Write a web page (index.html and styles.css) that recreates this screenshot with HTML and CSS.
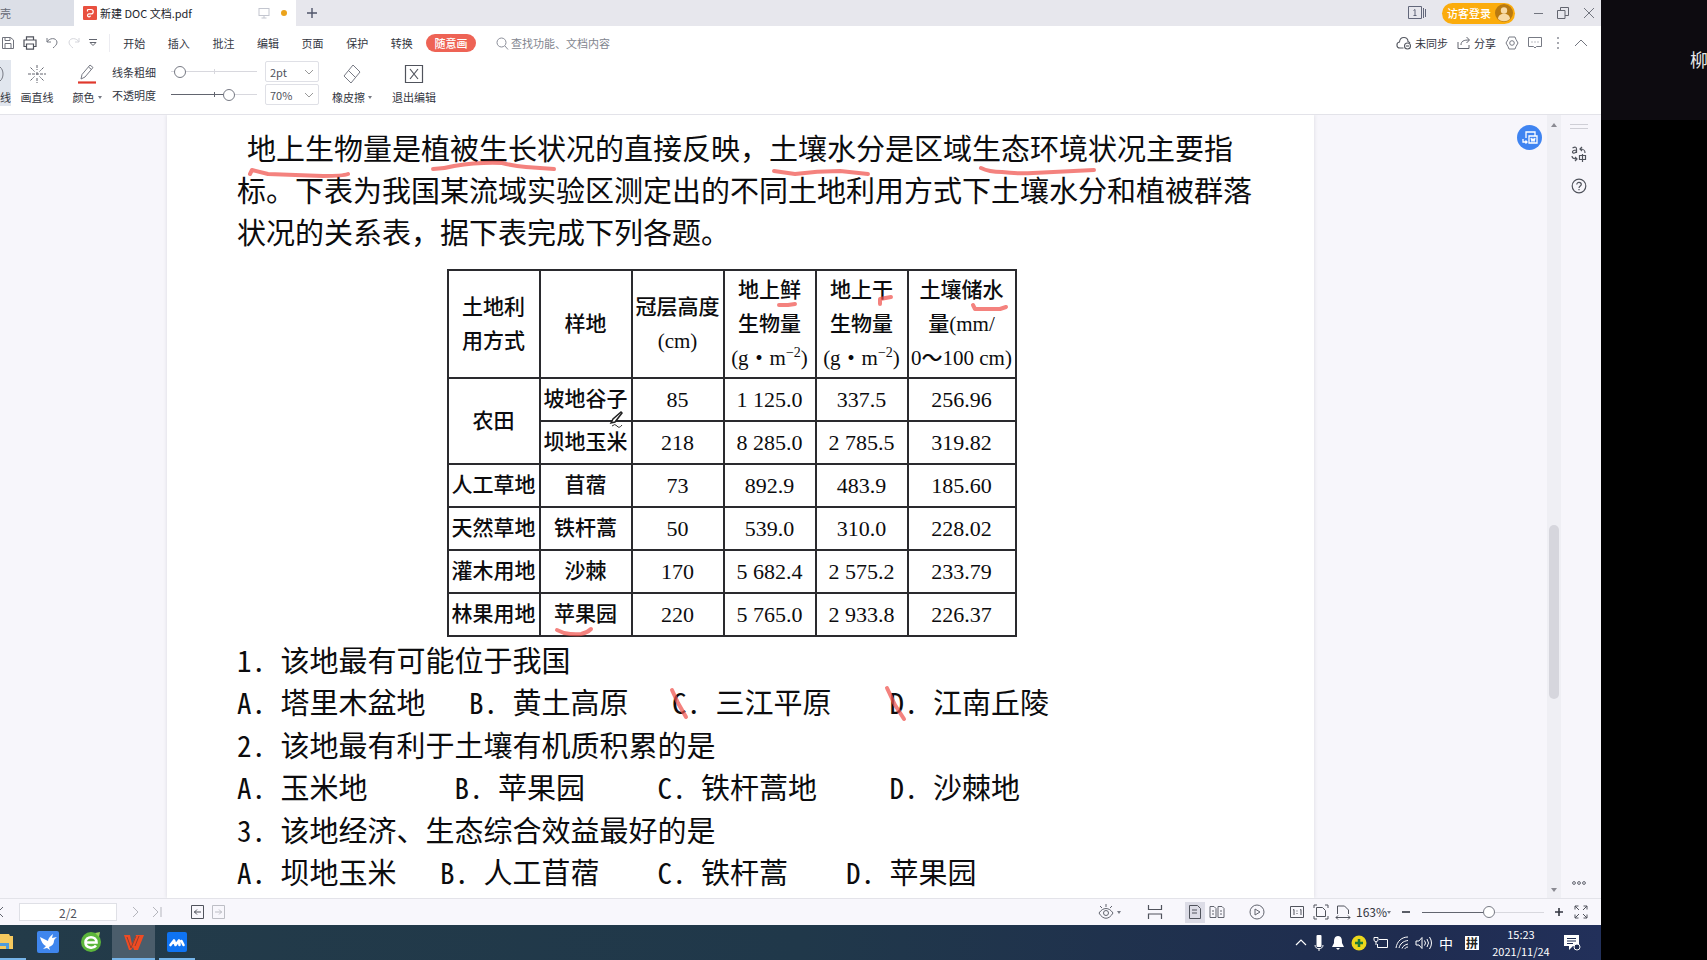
FILE: index.html
```html
<!DOCTYPE html>
<html lang="zh-CN">
<head>
<meta charset="utf-8">
<title>新建 DOC 文档.pdf</title>
<link rel="stylesheet" href="styles.css">
</head>
<body>
<div class="app">
  <header class="tabs">
    <button class="tab tab-home">壳</button>
    <div class="tab tab-active">
      <svg class="ico" width="14" height="14" viewBox="0 0 14 14"><rect width="14" height="14" rx="1" fill="#e9503f"/><path d="M4.500 3.500H8a2.200 2.200 0 0 1 0 4.400H6a1.500 1.500 0 1 0 1.500 1.800M4.500 3.500v2" fill="none" stroke="#fff" stroke-width="1.200"/></svg>
      <span class="tab-name">新建 DOC 文档.pdf</span>
      <svg class="ico" width="12" height="12" viewBox="0 0 12 12" fill="none" stroke="#c3c6cf"><rect x="1" y="1.500" width="10" height="7"/><path d="M6 9v2M3.500 11h5"/></svg>
      <span class="dot"></span>
    </div>
    <button class="plus" aria-label="新建标签"><svg width="12" height="12" viewBox="0 0 12 12" stroke="#50556a" stroke-width="1.400"><path d="M6 1v10M1 6h10"/></svg></button>
    <div class="win">
      <button aria-label="窗口列表"><svg width="18" height="14" viewBox="0 0 18 14" fill="none" stroke="#62677a"><path d="M.5.5h13v12H.5zM15.500 2v10M17.500 3v8"/><path d="M5.500 4.500 7 3.500v6M5.500 9.500h3"/></svg></button>
      <button class="login">访客登录<svg width="18" height="18" viewBox="0 0 18 18"><circle cx="9" cy="9" r="9" fill="#b97a10"/><circle cx="9" cy="6.500" r="3.200" fill="#f7d9a4"/><path d="M3 15c0-7 12-7 12 0a9 9 0 0 1-12 0z" fill="#f7d9a4"/></svg></button>
      <button class="w1" aria-label="最小化"><svg width="12" height="12" viewBox="0 0 12 12" stroke="#72757f"><path d="M1 6.500h9"/></svg></button>
      <button class="w2" aria-label="还原"><svg width="12" height="12" viewBox="0 0 12 12" fill="none" stroke="#62656f"><path d="M.5 3.500h7.500v8H.5zM3.500 3.500v-3h8v8h-3.500"/></svg></button>
      <button class="w3" aria-label="关闭"><svg width="12" height="12" viewBox="0 0 12 12" stroke="#72757f"><path d="m1 1 10 10M11 1 1 11"/></svg></button>
    </div>
  </header>

  <nav class="menu">
    <div class="quick">
      <svg width="14" height="14" viewBox="0 0 14 14" fill="none" stroke="#70737c"><path d="M1.500 1.500h8l3 2.500v8.500h-11zM4 1.500v3h5v-3M4 12V7.500h6V12"/></svg>
      <svg width="14" height="14" viewBox="0 0 14 14" fill="none" stroke="#50535c" stroke-width="1.200"><path d="M3.500 4V.8h7V4M3.500 10.500H1V4h12v6.500h-2.500M3.500 8h7v5.200h-7z"/></svg>
      <svg width="14" height="14" viewBox="0 0 14 14" fill="none" stroke="#777a84"><path d="M2 2v4h4M2 6c2-4 9-5 10 0 0 3-2 4-4 6"/></svg>
      <svg width="14" height="14" viewBox="0 0 14 14" fill="none" stroke="#d5d6dc"><path d="M12 2v4H8M12 6C10 2 3 1 2 6c0 3 2 4 4 6"/></svg>
      <svg width="8" height="10" viewBox="0 0 8 10" fill="none" stroke="#62656f"><path d="M0 1.500h8M1 4.500h6L4 7.500z"/></svg>
    </div>
    <div class="menus">
      <button>开始</button><button>插入</button><button>批注</button><button>编辑</button><button>页面</button><button>保护</button><button>转换</button>
    </div>
    <button class="draw">随意画</button>
    <button class="search"><svg width="13" height="13" viewBox="0 0 13 13" fill="none" stroke="#8b8e99"><circle cx="5.500" cy="5.500" r="4.500"/><path d="m9 9 3 3.500"/></svg>查找功能、文档内容</button>
    <div class="menu-right">
      <button><svg width="16" height="14" viewBox="0 0 16 14" fill="none" stroke="#555861" stroke-width="1.100"><path d="M7.500 12H4C0 12 0 6.500 3.500 6 4 0 12 0 12 5.500c1 .3 1.500.8 2 1.500"/><circle cx="11.500" cy="10" r="3"/><path d="M10 10h3"/></svg>未同步</button>
      <button class="share"><svg width="14" height="14" viewBox="0 0 14 14" fill="none" stroke="#62656f"><path d="M1 6v6.500h11V9M4 9c0-4 3-5 8-5M9.500 1l3 3-3 3"/></svg>分享</button>
      <button aria-label="设置"><svg width="14" height="14" viewBox="0 0 14 14" fill="none" stroke="#777a84"><path d="M4 1h6l1 2.500L13 7l-2 3.500L10 13H4l-1-2.500L1 7l2-3.500z"/><circle cx="7" cy="7" r="2.300"/></svg></button>
      <button aria-label="批注"><svg width="14" height="14" viewBox="0 0 14 14" fill="none" stroke="#777a84"><path d="M.5 1.500h13v9H8.500L7 12l-1.500-1.500h-5z"/><path d="M3.500 6h1M6.500 6h1M9.500 6h1"/></svg></button>
      <button aria-label="更多"><svg width="14" height="14" viewBox="0 0 14 14" fill="#8a8d96"><circle cx="7" cy="2" r="1"/><circle cx="7" cy="7" r="1"/><circle cx="7" cy="12" r="1"/></svg></button>
      <button aria-label="收起"><svg width="14" height="14" viewBox="0 0 14 14" fill="none" stroke="#72757f"><path d="m1 10 6-6 6 6"/></svg></button>
    </div>
  </nav>

  <section class="ribbon">
    <button class="tool cut"><svg width="20" height="20" viewBox="0 0 20 20" fill="none" stroke="#777a84"><path d="M9 3c4 3 4 11 0 14"/></svg><span>线</span></button>
    <button class="tool line"><svg width="20" height="20" viewBox="0 0 20 20" fill="none" stroke="#62656f"><path d="M1 10h18M10 1v5M10 8v4M10 14v5M3.500 3.500l4 4M16.500 3.500l-4 4M3.500 16.500l4-4M16.500 16.500l-4-4" stroke-dasharray="3 1"/></svg><span>画直线</span></button>
    <button class="tool color"><svg width="20" height="20" viewBox="0 0 20 20" fill="none" stroke="#777a84"><path d="m4 15 1-4.500L13 1l3 2.500-8 9.500zM11.500 3l3 2.500"/><path d="M1 18.500h18" stroke="#e0382c" stroke-width="2.200"/></svg><span>颜色<i class="caret"></i></span></button>
    <div class="sliders">
      <label for="thick">线条粗细</label>
      <input id="thick" type="range" class="range r-thick" min="0" max="100" value="4">
      <select aria-label="粗细"><option>2pt</option></select>
      <label for="alpha">不透明度</label>
      <input id="alpha" type="range" class="range r-alpha" min="0" max="100" value="70">
      <select aria-label="不透明度值"><option>70%</option></select>
    </div>
    <button class="tool eraser"><svg width="20" height="20" viewBox="0 0 20 20" fill="none" stroke="#777a84"><path d="M11 1l7 7-9 11-7-7zM6.500 6.500l7 7"/></svg><span>橡皮擦<i class="caret"></i></span></button>
    <button class="tool exit"><svg width="20" height="20" viewBox="0 0 20 20" fill="none" stroke="#50535c" stroke-width="1.200"><path d="M1.500 1.500h17v17h-17zM6 5l8 10M14 5 6 15"/></svg><span>退出编辑</span></button>
  </section>

  <main class="work">
    <div class="canvas">
      <article class="page">
        <p class="intro"><span class="first">地上生物量是植被生长状况的直接反映，土壤水分是区域生态环境状况主要指</span><br>标。下表为我国某流域实验区测定出的不同土地利用方式下土壤水分和植被群落<br>状况的关系表，据下表完成下列各题。</p>
        <table class="data">
          <colgroup><col class="c"><col class="c"><col class="c"><col class="c"><col class="c"><col class="c-last"></colgroup>
          <tr class="head"><th>土地利<br>用方式</th><th>样地</th><th>冠层高度<br>(cm)</th><th>地上鲜<br>生物量<br>(g・m<sup>−2</sup>)</th><th>地上干<br>生物量<br>(g・m<sup>−2</sup>)</th><th>土壤储水<br>量(mm/<br>0～100 cm)</th></tr>
          <tr><th rowspan="2">农田</th><th>坡地谷子</th><td>85</td><td>1 125.0</td><td>337.5</td><td>256.96</td></tr>
          <tr><th>坝地玉米</th><td>218</td><td>8 285.0</td><td>2 785.5</td><td>319.82</td></tr>
          <tr><th>人工草地</th><th>苜蓿</th><td>73</td><td>892.9</td><td>483.9</td><td>185.60</td></tr>
          <tr><th>天然草地</th><th>铁杆蒿</th><td>50</td><td>539.0</td><td>310.0</td><td>228.02</td></tr>
          <tr><th>灌木用地</th><th>沙棘</th><td>170</td><td>5 682.4</td><td>2 575.2</td><td>233.79</td></tr>
          <tr><th>林果用地</th><th>苹果园</th><td>220</td><td>5 765.0</td><td>2 933.8</td><td>226.37</td></tr>
        </table>
        <div class="questions">
          <p><b>1. </b>该地最有可能位于我国
<b>A. </b>塔里木盆地<b>   B. </b>黄土高原<b>   C. </b>三江平原<b>    D. </b>江南丘陵</p>
          <p><b>2. </b>该地最有利于土壤有机质积累的是
<b>A. </b>玉米地<b>      B. </b>苹果园<b>     C. </b>铁杆蒿地<b>     D. </b>沙棘地</p>
          <p><b>3. </b>该地经济、生态综合效益最好的是
<b>A. </b>坝地玉米<b>   B. </b>人工苜蓿<b>    C. </b>铁杆蒿<b>    D. </b>苹果园</p>
        </div>
        <svg class="ink" width="1148" height="782" viewBox="167 115 1148 782">
          <g fill="none" stroke="#f0524c" stroke-opacity=".72" stroke-width="4" stroke-linecap="round" stroke-linejoin="round">
            <path d="M250 174l2-4 16 4 55 2q20 0 25-2"/>
            <path d="M433 169q10 0 21-3 25-4 48-3 12 3 24 4l28 2"/>
            <path d="M774 171l21 3q22-3 45-3l28 3"/>
            <path d="M981 168q8 4 21 4 16 2 31 1l61-3"/>
            <path d="M779 305h9l7-1"/>
            <path d="M880 304v-5l11-2"/>
            <path d="M973 305l2 4h25l6-2"/>
            <path d="M557 630l7 3q10 2 17 1 6-1 10-5"/>
            <path d="M672 690l6 13 8 14"/>
            <path d="M887 688l8 17 9 14"/>
          </g>
          <path d="M611 423l2-4 8-7 1 1-7 9z" fill="#fff" stroke="#222" stroke-width="1.500"/><path d="M612 426q3-3 5 0t5-1" fill="none" stroke="#333"/>
        </svg>
      </article>
      <button class="convert" aria-label="转换"><svg width="16" height="16" viewBox="0 0 16 16" fill="none" stroke="#fff" stroke-width="1.300"><path d="M4 8V2h9v4M7 6h8v7H7zM1 9v3h4M3.500 10.500 5 12l-1.500 1.500M9 8l1 3 1-2 1 2 1-3"/></svg></button>
    </div>
    <div class="scroll"><i class="up"></i><i class="thumb"></i><i class="down"></i></div>
    <aside class="rail">
      <svg width="18" height="6" viewBox="0 0 18 6" stroke="#cfcfd6"><path d="M0 .5h18M0 4.500h18"/></svg>
      <button class="tr" aria-label="翻译"><svg width="16" height="16" viewBox="0 0 16 16" fill="none" stroke="#50535c" stroke-width="1.200"><path d="M1.500 2q4-2 4 1v4M5.500 4q-4 0-4 2c0 2 4 1 4-1M14 7c0-3-1-4-5-4M11 1 9 3l2 2M1 10c0 2 2 3 5 3M4 11l2 2-2 2M8.500 9.500h6v4h-6zM11.500 8v8"/></svg></button>
      <button aria-label="帮助"><svg width="16" height="16" viewBox="0 0 16 16" fill="none" stroke="#50535c" stroke-width="1.200"><circle cx="8" cy="8" r="6.800"/><path d="M5.800 6.500c0-3 4.500-2.800 4.500 0C10.300 8 8 8 8 10M8 11v1.300"/></svg></button>
      <svg class="ooo" width="14" height="6" viewBox="0 0 14 6" fill="none" stroke="#62656f"><circle cx="2" cy="3" r="1.400"/><circle cx="7" cy="3" r="1.400"/><circle cx="12" cy="3" r="1.400"/></svg>
    </aside>
  </main>

  <footer class="status">
    <svg width="4" height="12" viewBox="0 0 4 12" fill="none" stroke="#62656f"><path d="M3 1-2 6l5 5"/></svg>
    <input class="pageno" value="2/2" aria-label="页码">
    <svg class="nx" width="8" height="12" viewBox="0 0 8 12" fill="none" stroke="#b5b6bd"><path d="m1 1 5 5-5 5"/></svg>
    <svg class="ls" width="10" height="12" viewBox="0 0 10 12" fill="none" stroke="#b5b6bd"><path d="m1 1 5 5-5 5M9 1v10"/></svg>
    <svg class="bk" width="14" height="14" viewBox="0 0 14 14" fill="none" stroke="#50535c"><path d="M.5.5h12v13H.5zM10 7H3M6 4.500 3.500 7 6 9.500"/></svg>
    <svg class="fw" width="14" height="14" viewBox="0 0 14 14" fill="none" stroke="#bdbec5"><path d="M.5.5h12v13H.5zM3 7h7M7 4.500 9.500 7 7 9.500"/></svg>
    <div class="views">
      <svg width="16" height="16" viewBox="0 0 16 16" fill="none" stroke="#62656f"><path d="M1 9c4-6 10-6 14 0-4 7-10 7-14 0zM8 0v3M2 2l2 2M14 2l-2 2"/><circle cx="8" cy="9" r="2.500"/></svg>
      <i class="caret"></i>
      <svg class="s1" width="16" height="16" viewBox="0 0 16 16" fill="none" stroke="#50535c" stroke-width="1.200"><path d="M1.500 1v4.500h13V1M1.500 15v-5h13v5"/></svg>
      <button class="on" aria-label="单页"><svg width="14" height="16" viewBox="0 0 14 16" fill="none" stroke="#50535c"><path d="M1.500 1.500h8l3 3v10h-11zM4 6h5M4 9h5"/></svg></button>
      <svg class="s2" width="16" height="16" viewBox="0 0 16 16" fill="none" stroke="#62656f"><path d="M1 2.500h4l2 2v9H1zM9 2.500h4l2 2v9H9zM3 7h2M3 10h2M11 7h2M11 10h2"/></svg>
      <svg class="s3" width="16" height="16" viewBox="0 0 16 16" fill="none" stroke="#62656f"><circle cx="8" cy="8" r="7"/><path d="m6 5 5 3-5 3z"/></svg>
      <svg class="s3" width="16" height="16" viewBox="0 0 16 16" fill="none" stroke="#50535c"><path d="M1.500 2.500h13v11h-13zM4 6l1-.5V11M11 6l1-.5V11M8 6.500v1M8 9v1"/></svg>
      <svg class="s4" width="16" height="16" viewBox="0 0 16 16" fill="none" stroke="#50535c"><path d="M3.500 3.500h6l3 3v6h-9zM1 4V1h3M12 1h3v3M1 12v3h3M15 12v3h-3"/></svg>
      <svg class="s5" width="16" height="16" viewBox="0 0 16 16" fill="none" stroke="#50535c"><path d="M2.500 10V2h7l4 4v4M1 13.500h14M3 11.500l-2 2 2 2M13 11.500l2 2-2 2"/></svg>
      <span class="pct">163%</span><i class="caret"></i>
      <button class="zo" aria-label="缩小"><svg width="10" height="10" viewBox="0 0 10 10" stroke="#333640" stroke-width="1.600"><path d="M1 5h8"/></svg></button>
      <input type="range" class="range r-zoom" aria-label="缩放" min="0" max="100" value="55">
      <button class="zi" aria-label="放大"><svg width="10" height="10" viewBox="0 0 10 10" stroke="#333640" stroke-width="1.600"><path d="M1 5h8M5 1v8"/></svg></button>
      <svg width="14" height="14" viewBox="0 0 14 14" fill="none" stroke="#50535c"><path d="M1 4.500V1h3.500M1 1l4 4M9.500 1H13v3.500M13 1 9 5M1 9.500V13h3.500M1 13l4-4M13 9.500V13H9.500M13 13 9 9"/></svg>
    </div>
  </footer>

  <div class="taskbar">
    <button class="task t0" aria-label="文件"><svg width="13" height="22" viewBox="0 0 13 22"><path d="M0 3h9l1 2h3v13H0z" fill="#f6c95e"/><path d="M0 12h9v6H6v-3H0z" fill="#4f9bdc"/></svg></button>
    <button class="task" aria-label="飞鸟"><svg width="22" height="22" viewBox="0 0 22 22"><rect width="22" height="22" rx="2" fill="#3f86ee"/><path d="M3 6l8 4c0-2 2-5 5-7l-1 4 5-1c-1 1-3 2-3 4 0 3-2 5-5 6l1 3-3-2-4 1 3-3c-3-1-5-5-6-9z" fill="#fff"/></svg></button>
    <button class="task" aria-label="浏览器"><svg width="22" height="22" viewBox="0 0 22 22"><circle cx="11" cy="11" r="10" fill="#5cb63b"/><path d="M5.500 11.500h11c0-7-11-7-11 0 0 6 8 6.500 10.500 3" fill="none" stroke="#fff" stroke-width="2.600"/><path d="M15 2l5-1-1 5" fill="#9bd35a"/></svg></button>
    <button class="task active run" aria-label="WPS"><svg width="22" height="22" viewBox="0 0 22 22"><path d="M1 4h6l2 9 4-9h8l-6 15h-4l-1-3-2 3H6z" fill="#ef4b23"/><path d="M4 6l4 11 5-12M12 15l4-10" fill="none" stroke="#7a3a30" stroke-width=".8"/></svg></button>
    <button class="task run meet" aria-label="会议"><svg width="20" height="20" viewBox="0 0 20 20"><rect width="20" height="20" rx="2" fill="#0f73f2"/><path d="M3.500 13 7 8.500 8.500 13 12 8.500 12.500 13M14.500 9l2 4" fill="none" stroke="#fff" stroke-width="2.600" stroke-linejoin="round" stroke-linecap="round"/></svg></button>
    <div class="tray">
      <svg width="12" height="16" viewBox="0 0 12 16" fill="none" stroke="#fff" stroke-width="1.200"><path d="m1 10 5-5 5 5"/></svg>
      <svg width="12" height="18" viewBox="0 0 12 18"><rect x="3.500" y="1" width="5" height="12" rx="1" fill="#fff"/><path d="M2 11c0 5 8 5 8 0M6 14v3" fill="none" stroke="#fff"/></svg>
      <svg width="14" height="16" viewBox="0 0 14 16" fill="#fff"><path d="M7 1c4 0 4 4 4 7l2 4H1l2-4c0-3 0-7 4-7zM5 13h4l-2 2z"/></svg>
      <svg width="16" height="16" viewBox="0 0 16 16"><circle cx="8" cy="8" r="7.500" fill="#ecd81c"/><path d="M8 4v8M4 8h8" stroke="#1c7a38" stroke-width="2.500"/></svg>
      <svg width="16" height="14" viewBox="0 0 16 14" fill="none" stroke="#fff"><path d="M6 3.500h8.500v8H4.500V8M1 1.500h4v3q-2 3-4 0zM3 6v3"/></svg>
      <svg width="14" height="14" viewBox="0 0 14 14" fill="none" stroke="#fff"><path d="M1 12C2 5 7 1 13 1M4 12c1-4 4-7 9-7.500M7 12.500c.5-2 3-4 6-4.500M10 13c0-1 1-2 3-2"/></svg>
      <svg width="18" height="14" viewBox="0 0 18 14" fill="none" stroke="#fff"><path d="M1 5h3l3-3.500v11L4 9H1zM9.500 4.500q2 2.500 0 5M12 3q3 4 0 8M14.500 1q4 6 0 12"/></svg>
      <span class="ime">中</span>
      <span class="pin">拼</span>
      <time class="clock">15:23<br>2021/11/24</time>
      <svg class="note" width="18" height="18" viewBox="0 0 18 18"><path d="M1 1h15v11h-6l-4 4v-4H1z" fill="#fff"/><path d="M4 4.500h9M4 7h9M4 9.500h6" stroke="#1f2c50"/><circle cx="14" cy="13" r="3" fill="#1f2c50" stroke="#fff"/></svg>
    </div>
  </div>
</div>
<aside class="side"><div class="person">柳</div></aside>
</body>
</html>
```

FILE: styles.css
```css
* { box-sizing: border-box; }
body { margin: 0; height: 100vh; display: flex; overflow: hidden; background: #000; color: #33363f; font: 11px/16px "Noto Sans CJK SC", sans-serif; }
button { border: 0; padding: 0; margin: 0; background: none; color: inherit; font: inherit; display: flex; align-items: center; justify-content: center; white-space: nowrap; }
svg { display: block; flex: none; }
.app { flex: 1; min-width: 0; display: flex; flex-direction: column; background: #fff; }

.tabs { height: 26px; display: flex; background: #e7e7ed; }
.tab { display: flex; align-items: center; }
.tab-home { width: 74px; justify-content: flex-start; background: #dcdfe7; color: #666a75; overflow: hidden; }
.tab-active { width: 222px; background: #fff; padding-left: 9px; gap: 3px; color: #22242b; }
.tab-name { width: 155px; }
.dot { width: 6px; height: 6px; margin-left: 8px; border-radius: 50%; background: #eba31b; }
.plus { width: 32px; }
.win { margin-left: auto; padding-right: 6px; display: flex; align-items: center; }
.login { height: 21px; margin: 0 18px 0 16px; padding: 0 2px 0 5px; gap: 4px; border-radius: 11px; background: #fbac0c; color: #fff; font-weight: 500; }
.w1 { margin-right: 12px; }
.w2 { margin-right: 14px; }

.menu { height: 34px; display: flex; align-items: center; }
.quick { width: 110px; height: 18px; padding-left: 1px; display: flex; align-items: center; gap: 8px; border-right: 1px solid #ececf1; }
.menus { width: 314px; padding-left: 2px; display: flex; }
.menus button { flex: 1; }
.draw { width: 50px; height: 18px; margin-left: 2px; border-radius: 9px; background: #ee6355; color: #fff; font-weight: 500; }
.search { margin-left: 20px; gap: 2px; color: #82858f; }
.menu-right { margin-left: auto; padding-right: 13px; display: flex; gap: 9px; }
.menu-right button { gap: 3px; min-width: 14px; }

.ribbon { height: 55px; display: flex; border-bottom: 1px solid #e3e3e9; }
.tool { height: 46px; flex-direction: column; justify-content: space-between; padding: 4px 0 1px; }
.tool span { display: flex; align-items: center; }
.cut { width: 11px; align-items: flex-end; background: #e1e6ee; overflow: hidden; }
.line { width: 52px; }
.color { width: 48px; }
.caret { display: block; margin-left: 3px; border: 2px solid transparent; border-top: 3px solid #777a84; border-bottom: 0; }
.sliders { display: grid; grid-template-columns: 44px 86px 54px; grid-template-rows: 21px 21px; gap: 2px 15px; align-items: center; align-content: start; padding: 1px 0 0 1px; }
.sliders select { width: 54px; height: 21px; margin-left: -7px; padding: 0 4px; border: 1px solid #dfe0e6; border-radius: 2px; font: inherit; color: #50535c; appearance: none; background: linear-gradient(45deg, transparent 40%, #999 40%, #999 60%, transparent 60%) 39px 8px / 4px 4px no-repeat, linear-gradient(-45deg, transparent 40%, #999 40%, #999 60%, transparent 60%) 43px 8px / 4px 4px no-repeat, #fff; }
.range { appearance: none; width: 100%; height: 14px; margin: 0; background: linear-gradient(#d8d8de, #d8d8de) center / 100% 1px no-repeat; }
.range::-webkit-slider-thumb { appearance: none; width: 12px; height: 12px; border: 1px solid #777a84; border-radius: 50%; background: #fff; }
.r-thick { background: linear-gradient(#d8d8de, #d8d8de) center / 1px 5px no-repeat, linear-gradient(#d8d8de, #d8d8de) center / 100% 1px no-repeat; }
.r-alpha { background: linear-gradient(#62656f, #62656f) center / 1px 5px no-repeat, linear-gradient(90deg, #62656f 70%, #d8d8de 70%) center / 100% 1px no-repeat; }
.eraser { width: 52px; }
.exit { width: 66px; margin-left: 3px; }

.work { flex: 1; min-height: 0; display: flex; background: #f7f6fb; }
.canvas { flex: 1; min-width: 0; position: relative; overflow: hidden; padding: 0 233px 0 167px; }
.page { position: relative; height: 100%; padding: 11px 88px 0 70px; background: #fff; box-shadow: 0 0 4px #d9d8df; overflow: hidden; color: #0c0c0e; font-size: 29px; line-height: 42px; white-space: nowrap; }
.intro { margin: 0 0 17px; }
.first { margin-left: 10px; }
.ink { position: absolute; left: 0; top: 0; }
.data { width: 570px; margin: 0 auto; table-layout: fixed; border-collapse: collapse; font: 22px/31px "Liberation Serif", "Noto Sans CJK SC", serif; text-align: center; }
.data th, .data td { height: 43px; padding: 0; border: 2px solid #2a2a2e; }
.data th { font-size: 21px; font-weight: 500; }
.data .head th { height: 108px; line-height: 34px; }
.data sup { font-size: 14px; line-height: 0; }
.c { width: 92px; }
.questions { margin-top: 1px; display: grid; gap: 1px; }
.questions p { margin: 0; white-space: pre; }
.questions b { font-weight: 400; font-feature-settings: "hwid"; }
.convert { position: absolute; right: 5px; top: 10px; width: 25px; height: 25px; border-radius: 50%; background: #3f84f1; }
.scroll { width: 14px; display: flex; flex-direction: column; align-items: center; background: #efeff4; padding: 8px 0 6px; }
.up { border: 3px solid transparent; border-bottom: 4px solid #8a8a92; border-top: 0; }
.down { margin-top: auto; border: 3px solid transparent; border-top: 4px solid #8a8a92; border-bottom: 0; }
.thumb { width: 10px; flex: 0 0 174px; margin-top: 398px; border-radius: 5px; background: #d6d6dd; }
.rail { width: 40px; padding: 9px 4px 12px 0; display: flex; flex-direction: column; align-items: center; }
.rail .tr { margin: 16px 0; }
.ooo { margin-top: auto; }

.status { height: 27px; display: flex; align-items: center; background: #f8f7fc; border-top: 1px solid #e3e3e9; }
.pageno { width: 98px; height: 18px; margin-left: 15px; padding: 0; border: 1px solid #dfe0e6; background: #fff; text-align: center; font: 12px/16px "Noto Sans CJK SC", sans-serif; color: #50535c; }
.nx { margin-left: 15px; }
.ls { margin-left: 12px; }
.bk { margin-left: 29px; }
.fw { margin-left: 7px; }
.views { margin-left: auto; padding-right: 13px; display: flex; align-items: center; }
.s1 { margin: 0 22px 0 26px; }
.on { width: 20px; height: 21px; background: #dcdce6; }
.s2 { margin: 0 24px 0 4px; }
.s3 { margin-right: 24px; }
.s3 + .s3 { margin-right: 8px; }
.s4 { margin-right: 6px; }
.s5 { margin-right: 5px; }
.pct { width: 28px; font-size: 12px; }
.zo { margin: 0 11px 0 10px; }
.r-zoom { width: 122px; background: linear-gradient(90deg, #62656f 55%, #d8d8de 55%) center / 100% 1px no-repeat; }
.zi { margin: 0 10px; }

.taskbar { height: 35px; display: flex; background: linear-gradient(90deg, #233b49, #20384a 50%, #1f2c50 88%, #22305a); }
.task { width: 43px; border-bottom: 2px solid transparent; }
.t0 { width: 26px; justify-content: flex-start; border-color: #76b4e8; }
.run { border-color: #76b4e8; }
.active { background: #4b5d6b; }
.meet { width: 36px; margin-left: 4px; }
.tray { margin-left: auto; padding-right: 20px; display: flex; align-items: center; gap: 6px; color: #fff; }
.ime { font-size: 14px; }
.pin { width: 14px; height: 14px; margin-left: 6px; background: #fff; color: #222; font: 700 12px/14px "Noto Sans CJK SC", sans-serif; text-align: center; }
.clock { width: 72px; font-size: 11px; line-height: 17px; text-align: center; }
.side { width: 106px; overflow: hidden; }
.person { height: 120px; padding: 48px 0 0 89px; background: #0d0b10; color: #e8e8e8; font-size: 18px; line-height: 22px; }
```
